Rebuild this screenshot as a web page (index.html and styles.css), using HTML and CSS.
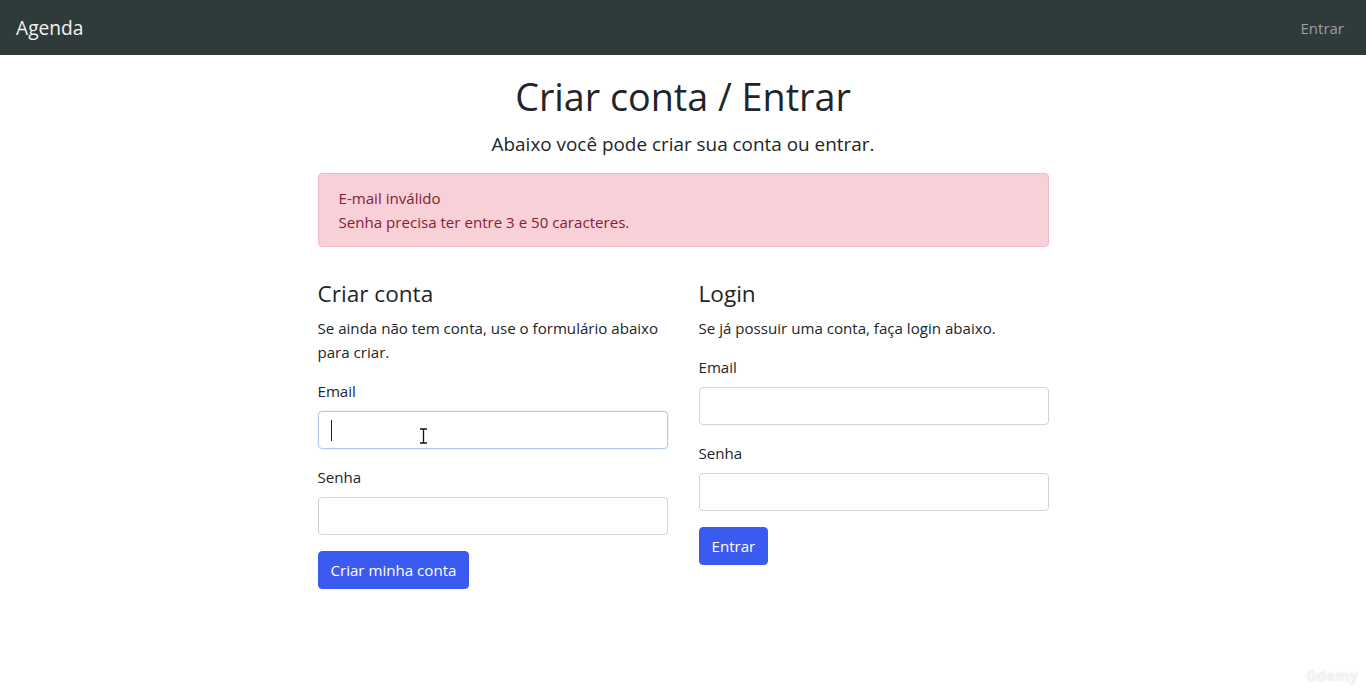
FILE: index.html
```html
<!DOCTYPE html>
<html lang="pt-BR">
<head>
<meta charset="utf-8">
<title>Agenda</title>
<link rel="stylesheet" href="styles.css">
</head>
<body>
<nav class="navbar">
  <a class="brand" href="#">Agenda</a>
  <a class="nav-link" href="#">Entrar</a>
</nav>
<main class="container">
  <h1 class="title">Criar conta / Entrar</h1>
  <p class="lead">Abaixo você pode criar sua conta ou entrar.</p>
  <div class="alert">
    <div>E-mail inválido</div>
    <div>Senha precisa ter entre 3 e 50 caracteres.</div>
  </div>
  <div class="row">
    <section class="col">
      <h4 class="col-title">Criar conta</h4>
      <p class="desc">Se ainda não tem conta, use o formulário abaixo para criar.</p>
      <form>
        <div class="field">
          <label class="label">Email</label>
          <div class="input focused"><span class="caret"></span>
            <svg class="ibeam" width="9" height="16" viewBox="0 0 9 16"><path d="M1 1h7M1 15h7M4.5 1v14" stroke="#fff" stroke-width="3"/><path d="M1 1h7M1 15h7M4.5 1v14" stroke="#111" stroke-width="1.3"/></svg>
          </div>
        </div>
        <div class="field">
          <label class="label">Senha</label>
          <div class="input"></div>
        </div>
        <button class="btn" type="button">Criar minha conta</button>
      </form>
    </section>
    <section class="col">
      <h4 class="col-title">Login</h4>
      <p class="desc">Se já possuir uma conta, faça login abaixo.</p>
      <form>
        <div class="field">
          <label class="label">Email</label>
          <div class="input"></div>
        </div>
        <div class="field">
          <label class="label">Senha</label>
          <div class="input"></div>
        </div>
        <button class="btn" type="button">Entrar</button>
      </form>
    </section>
  </div>
</main>
<div class="watermark">ûdemy</div>
</body>
</html>
```
FILE: styles.css
```css
* { box-sizing: border-box; }
html, body { margin: 0; padding: 0; }
body {
  font-family: "Open Sans", "Noto Sans", sans-serif;
  font-size: 15.1px;
  line-height: 24px;
  color: #212529;
  background: #fff;
}
.navbar {
  height: 55px;
  background: #2f3a3b;
  display: flex;
  align-items: center;
  justify-content: space-between;
  padding: 0 22px 0 16px;
}
.brand {
  color: #f2f2f2;
  font-size: 19.2px;
  text-decoration: none;
}
.nav-link {
  color: #9a9fa0;
  text-decoration: none;
  font-size: 15px;
}
.container {
  width: 731px;
  margin: 0 auto;
  padding-top: 18px;
}
.title {
  margin: 0 0 8px;
  text-align: center;
  font-size: 37.7px;
  line-height: 48px;
  font-weight: 400;
}
.lead {
  margin: 0 0 14px;
  text-align: center;
  font-size: 18.9px;
  line-height: 30px;
}
.alert {
  background: #f8d0d7;
  border: 1px solid #f2bcc6;
  color: #85203a;
  border-radius: 4px;
  padding: 12px 20px;
  margin-bottom: 33px;
}
.row {
  display: flex;
  gap: 31px;
}
.col { flex: 1; }
.col-title {
  margin: 0 0 8px;
  font-size: 22.6px;
  line-height: 28px;
  font-weight: 400;
}
.desc { margin: 0 0 15px; }
.field { margin-bottom: 16px; }
.label { display: block; margin-bottom: 8px; }
.input {
  position: relative;
  height: 38px;
  border: 1px solid #ced4da;
  border-radius: 4px;
  background: #fff;
}
.input.focused {
  border-color: #b3c9ee;
  box-shadow: 0 0 0 1px rgba(13, 110, 253, 0.06);
}
.caret {
  position: absolute;
  left: 12px;
  top: 8px;
  width: 1px;
  height: 21px;
  background: #222;
}
.ibeam {
  position: absolute;
  left: 100px;
  top: 16px;
}
.btn {
  font: inherit;
  height: 38px;
  padding: 0 12px;
  background: #3b5bf0;
  color: #fff;
  border: 1px solid #3b5bf0;
  border-radius: 4px;
}
.watermark {
  position: fixed;
  right: 8px;
  bottom: 4px;
  color: #f4f4f4;
  font-size: 15px;
  font-weight: 700;
  text-shadow: 0 0 2px #ddd;
}
```
